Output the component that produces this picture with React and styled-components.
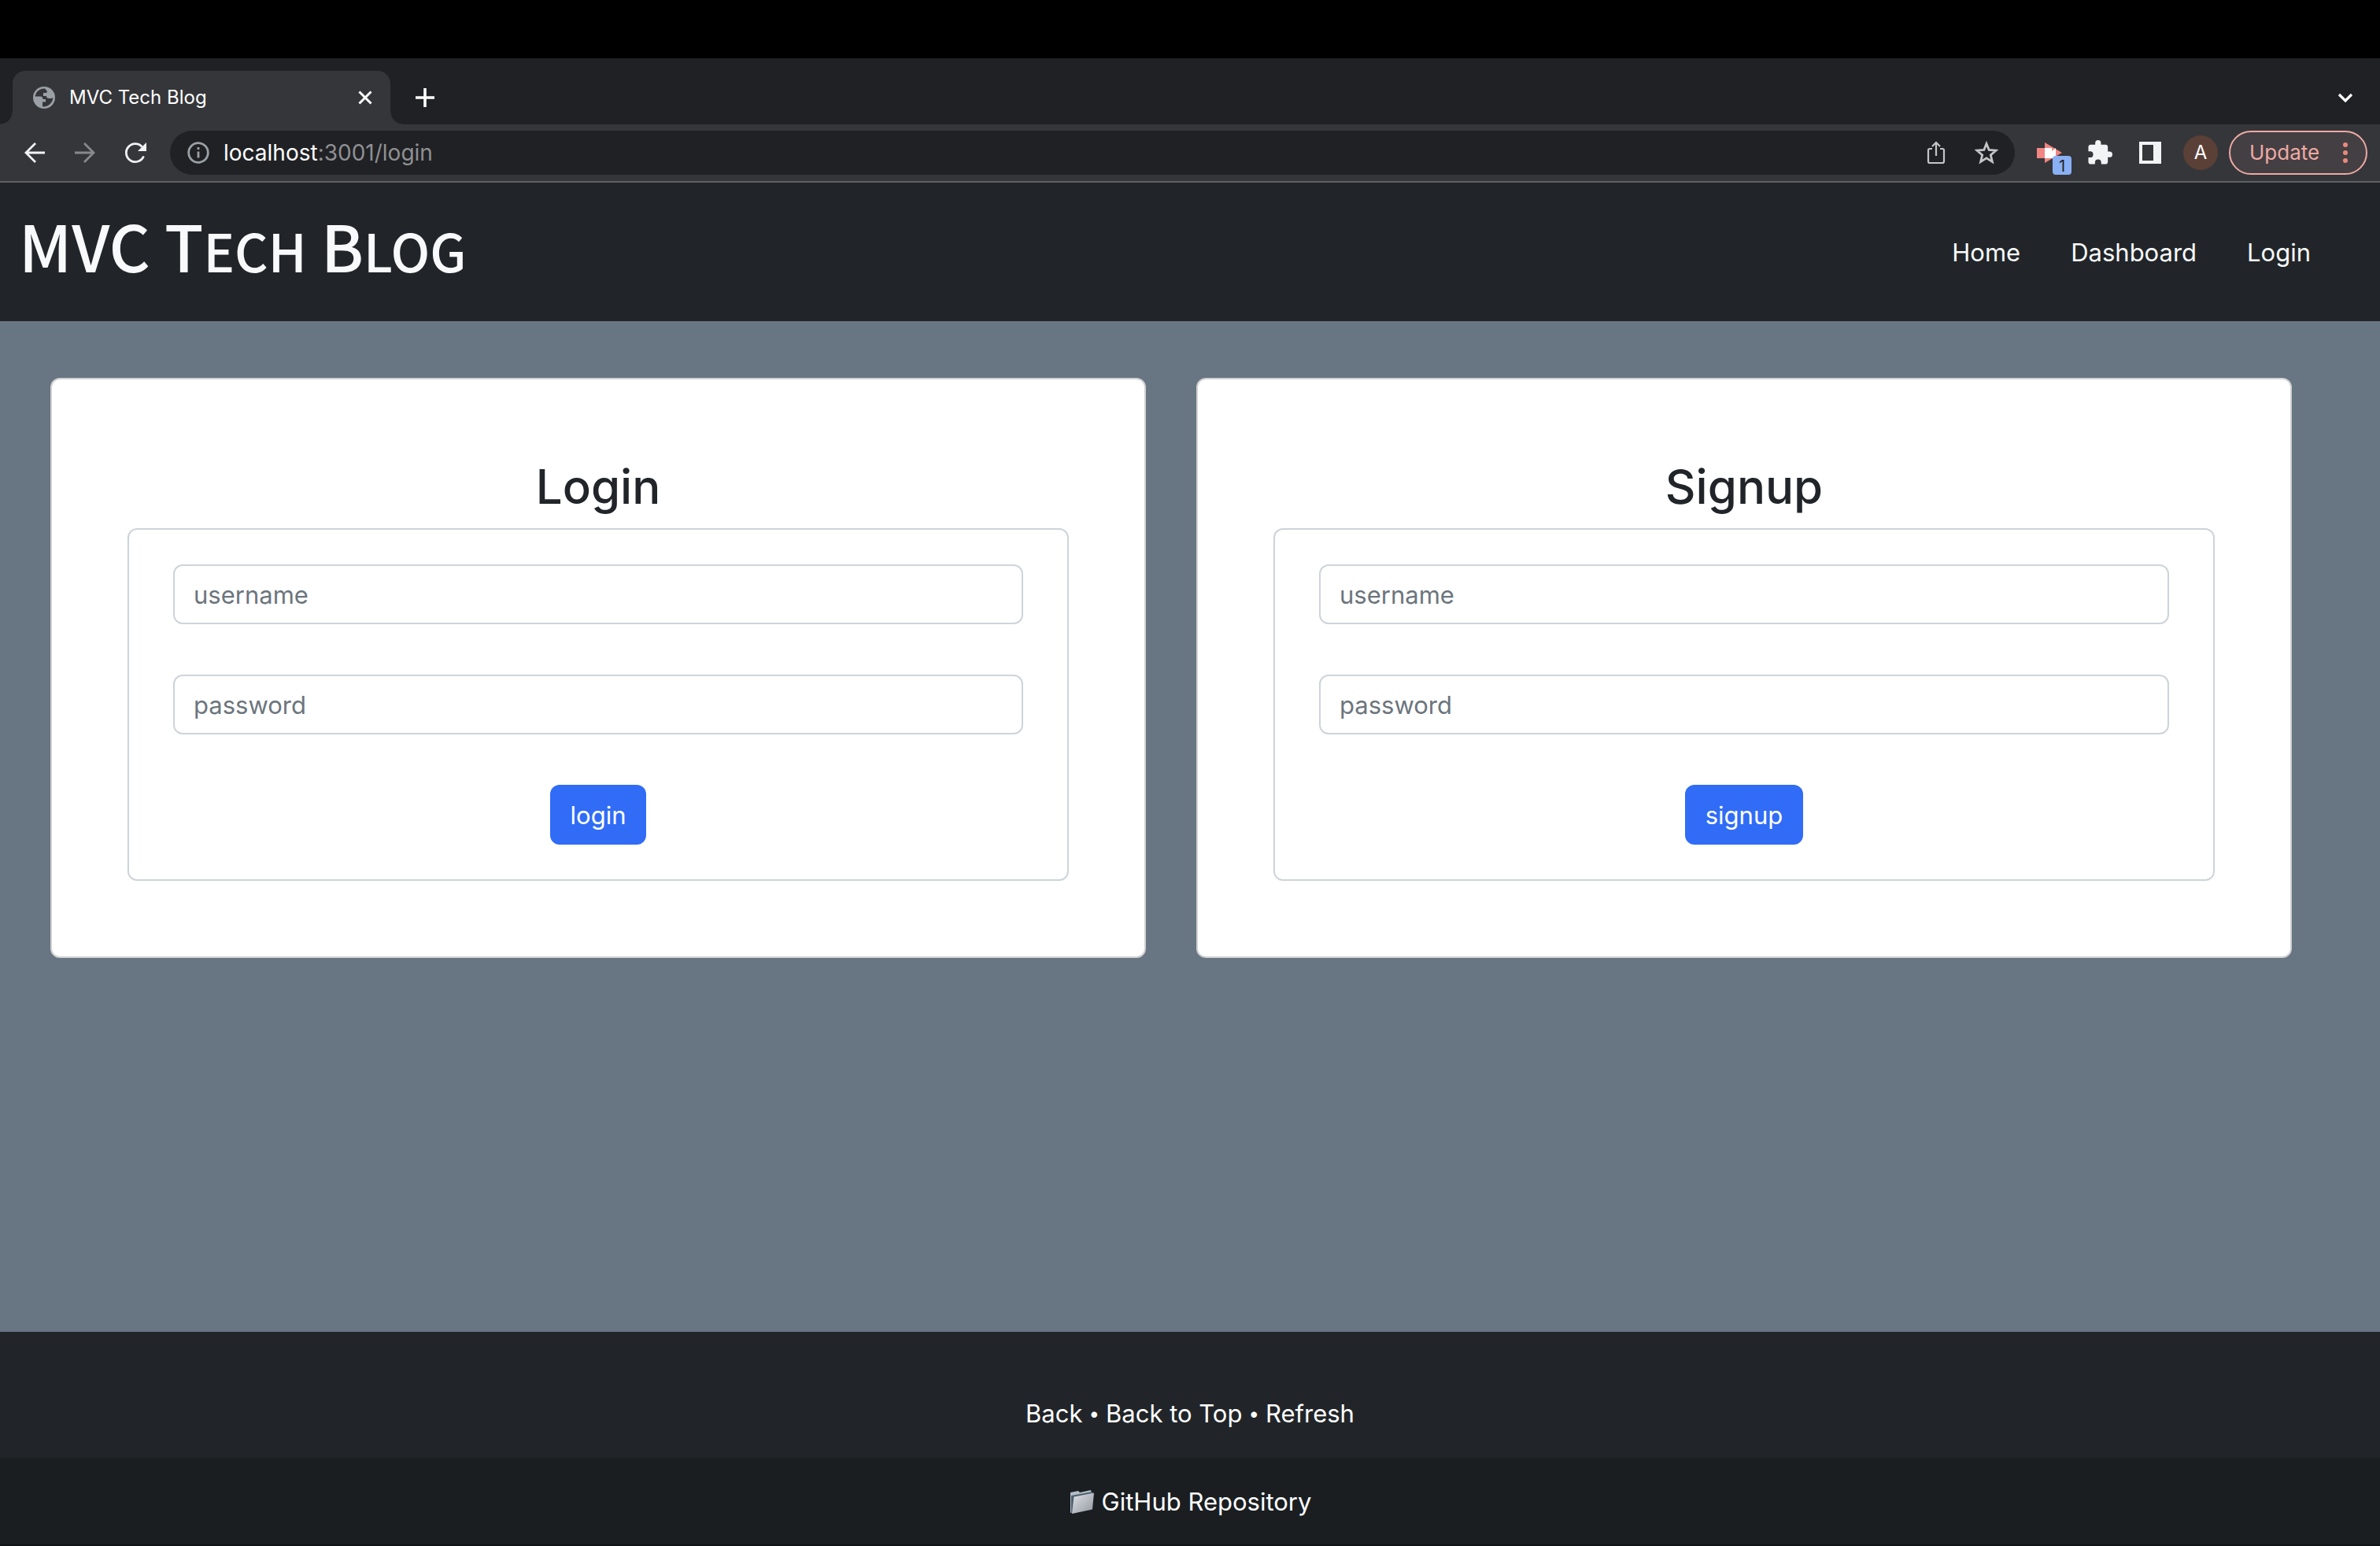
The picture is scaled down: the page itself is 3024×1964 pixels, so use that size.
import React from "react";
import styled, { createGlobalStyle } from "styled-components";

const GlobalStyle = createGlobalStyle`
  *, *::before, *::after { box-sizing: border-box; }
  html, body, #root { height: 100%; }
  body {
    margin: 0;
    background: #687582;
    color: #212529;
    font: 400 31px/48px Inter, "Liberation Sans", sans-serif;
  }
  button, input { font: inherit; }
  a { color: inherit; text-decoration: none; }
`;

const Screen = styled.div`
  min-height: 100%;
  display: flex;
  flex-direction: column;
`;

const MenuBar = styled.div`
  height: 74px;
  background: #000;
`;

const TabStrip = styled.div`
  height: 84px;
  padding: 16px 28px 0 16px;
  display: flex;
  align-items: stretch;
  background: #202124;
`;

const Tab = styled.div`
  position: relative;
  width: 480px;
  padding: 0 16px 0 24px;
  display: flex;
  align-items: center;
  gap: 16px;
  border-radius: 16px 16px 0 0;
  background: #35363a;
  color: #fff;
  font-size: 24px;
  line-height: 32px;

  &::before, &::after {
    content: "";
    position: absolute;
    bottom: 0;
    width: 16px;
    height: 16px;
  }
  &::before {
    right: 100%;
    background: radial-gradient(circle at 0 0, transparent 15px, #35363a 16px);
  }
  &::after {
    left: 100%;
    background: radial-gradient(circle at 100% 0, transparent 15px, #35363a 16px);
  }
`;

const TabTitle = styled.span`
  flex: 1;
`;

const IconButton = styled.button`
  width: 32px;
  height: 32px;
  padding: 0;
  border: 0;
  display: grid;
  place-items: center;
  background: none;
  color: ${(p) => p.$color || "#f1f3f4"};

  svg { display: block; width: 100%; height: 100%; }
`;

const StripActions = styled.div`
  flex: 1;
  padding: 0 0 0 28px;
  display: flex;
  align-items: center;
  justify-content: space-between;
`;

const Toolbar = styled.div`
  height: 74px;
  padding: 0 16px 0 28px;
  display: flex;
  align-items: center;
  border-bottom: 2px solid #5f6063;
  background: #35363a;
`;

const NavButtons = styled.div`
  display: flex;
  gap: 32px;
`;

const AddressBar = styled.div`
  flex: 1;
  height: 56px;
  margin: 0 28px 0 28px;
  padding: 0 20px 0 20px;
  display: flex;
  align-items: center;
  gap: 32px;
  border-radius: 28px;
  background: #202124;
`;

const Address = styled.div`
  flex: 1;
  display: flex;
  align-items: center;
  gap: 16px;
  color: #8f9093;
  font-size: 28px;
  line-height: 40px;

  b { color: #fff; font-weight: 400; }
`;

const Extensions = styled.div`
  display: flex;
  align-items: center;
  gap: 32px;
`;

const Badged = styled.div`
  position: relative;
`;

const Badge = styled.span`
  position: absolute;
  top: 20px;
  left: 20px;
  width: 24px;
  height: 24px;
  border-radius: 4px;
  background: #8ab0f4;
  color: #202124;
  font-size: 20px;
  line-height: 26px;
  text-align: center;
`;

const Profile = styled.button`
  width: 44px;
  height: 44px;
  margin: 0 -8px 0 -6px;
  padding: 0;
  border: 0;
  border-radius: 50%;
  background: #5a4037;
  color: #fff;
  font-size: 24px;
  line-height: 44px;
`;

const UpdateButton = styled.button`
  width: 176px;
  height: 56px;
  margin: 0 0 0 -10px;
  padding: 0 12px 0 24px;
  display: flex;
  align-items: center;
  justify-content: space-between;
  border: 2px solid #eeaaa4;
  border-radius: 28px;
  background: #443f42;
  color: #eeaaa4;
  font-size: 26px;
  line-height: 40px;

  svg { width: 28px; height: 28px; }
`;

const Header = styled.header`
  height: 176px;
  padding: 2px 88px 0 24px;
  display: flex;
  align-items: center;
  justify-content: space-between;
  background: #212529;
  color: #f8f9fa;
`;

const Brand = styled.h1`
  margin: 0;
  padding-bottom: 14px;
  font: 500 81px/100px "Noto Sans CJK JP", "Noto Sans", sans-serif;
`;

const SmallCaps = styled.span`
  font-size: 66px;
`;

const Nav = styled.nav`
  display: flex;
  gap: 64px;
`;

const Main = styled.main`
  flex: 1;
  padding: 72px 112px 72px 64px;
  display: grid;
  grid-template-columns: 1fr 1fr;
  align-items: start;
  gap: 64px;
`;

const Card = styled.section`
  padding: 96px;
  border: 2px solid #d0d1d2;
  border-radius: 12px;
  background: #fff;
  text-align: center;
`;

const CardTitle = styled.h2`
  margin: 0 0 13px;
  font-size: 60px;
  font-weight: 500;
  line-height: 80px;
`;

const Form = styled.form`
  padding: 44px 56px;
  display: flex;
  flex-direction: column;
  align-items: center;
  gap: 64px;
  border: 2px solid #ced4da;
  border-radius: 12px;
`;

const Field = styled.input`
  width: 100%;
  height: 76px;
  padding: 0 24px;
  border: 2px solid #ced4da;
  border-radius: 12px;
  background: #fff;
  color: #212529;

  &::placeholder { color: #6c757d; opacity: 1; }
`;

const Submit = styled.button`
  height: 76px;
  padding: 2px 26px 0;
  border: 0;
  border-radius: 12px;
  background: #306cf6;
  color: #fff;
`;

const Footer = styled.footer`
  background: #212529;
  color: #fff;
  text-align: center;
`;

const FooterLinks = styled.div`
  height: 160px;
  padding-top: 80px;
  display: flex;
  justify-content: center;
  gap: 8px;
`;

const Dot = styled.span`
  font-size: 24px;
`;

const Repository = styled.div`
  height: 112px;
  padding-top: 32px;
  display: flex;
  align-items: flex-start;
  justify-content: center;
  border-bottom: 2px solid #121416;
  background: #1a1e21;

  a { display: flex; align-items: center; gap: 8px; }
`;

const Stroke = ({ children, width = 2, ...rest }) => (
  <svg viewBox="0 0 32 32" fill="none" stroke="currentColor" strokeWidth={width} aria-hidden="true" {...rest}>
    {children}
  </svg>
);

const Globe = () => (
  <svg width="32" height="32" viewBox="0 0 32 32" aria-hidden="true">
    <circle cx="16" cy="16" r="14" fill="#9aa0a6" />
    <path
      fill="#35363a"
      d="M17 4.600C11 4 5.500 8.500 4.600 14.500h6.400c2.500 0 3.500 1.500 3.500 3.500h3.500v3.500h-4v5.800c7 .9 13-4.500 13.400-11.300-1 .8-2 1-3.400 1h-2c-2 0-3-1-3-3h-4v-4h3c1.200 0 2-.8 2-2z"
    />
  </svg>
);

const Folder = () => (
  <svg width="34" height="32" viewBox="0 0 34 32" aria-hidden="true">
    <defs>
      <linearGradient id="folder" x1="0" y1="0" x2="1" y2="1">
        <stop offset="0" stopColor="#dfe2e6" />
        <stop offset="1" stopColor="#9297a0" />
      </linearGradient>
    </defs>
    <path fill="#b3bec7" d="M2 4l10-2 2 2 14-3 1 4-24 24-3 1z" />
    <path fill="#4d5f6e" d="M3 8l27-5v6L5 30H3z" />
    <path fill="url(#folder)" d="M6.500 9.500L32 4.500 30 25.500 4 31z" />
  </svg>
);

function CredentialsCard({ id, title, action }) {
  return (
    <Card aria-labelledby={`${id}-title`}>
      <CardTitle id={`${id}-title`}>{title}</CardTitle>
      <Form onSubmit={(e) => e.preventDefault()}>
        <Field aria-label="username" name="username" placeholder="username" />
        <Field aria-label="password" name="password" type="password" placeholder="password" />
        <Submit type="submit">{action}</Submit>
      </Form>
    </Card>
  );
}

function Browser() {
  return (
    <>
      <TabStrip>
        <Tab>
          <Globe />
          <TabTitle>MVC Tech Blog</TabTitle>
          <IconButton $color="#fff" aria-label="Close tab">
            <Stroke width="3"><path d="M8.500 8.500l15 15M23.500 8.500l-15 15" /></Stroke>
          </IconButton>
        </Tab>
        <StripActions>
          <IconButton $color="#fff" aria-label="New tab">
            <Stroke width="3.600"><path d="M16 4v24M4 16h24" /></Stroke>
          </IconButton>
          <IconButton $color="#fff" aria-label="Search tabs">
            <Stroke width="3.200"><path d="M8 12l8 8 8-8" /></Stroke>
          </IconButton>
        </StripActions>
      </TabStrip>
      <Toolbar>
        <NavButtons>
          <IconButton aria-label="Back">
            <Stroke width="2.800"><path d="M29 16H5M17 4L5 16l12 12" /></Stroke>
          </IconButton>
          <IconButton $color="#88898c" aria-label="Forward">
            <Stroke width="2.800"><path d="M3 16h24M15 4l12 12-12 12" /></Stroke>
          </IconButton>
          <IconButton aria-label="Reload">
            <Stroke width="2.800">
              <path d="M26.500 20.500A11.500 11.500 0 1 1 24.500 8.500" />
              <path d="M30 3v11H19z" fill="currentColor" stroke="none" />
            </Stroke>
          </IconButton>
        </NavButtons>
        <AddressBar>
          <Address>
            <IconButton $color="#9aa0a6" aria-label="Site information">
              <Stroke width="2.800">
                <circle cx="16" cy="16" r="12.300" />
                <path d="M16 14.500v8M16 9v3" />
              </Stroke>
            </IconButton>
            <span><b>localhost</b>:3001/login</span>
          </Address>
          <IconButton $color="#c4c5c7" aria-label="Share">
            <Stroke width="2.200">
              <path d="M11 11H8a2 2 0 0 0-2 2v14a2 2 0 0 0 2 2h16a2 2 0 0 0 2-2V13a2 2 0 0 0-2-2h-3M16 20V3M11 8l5-5 5 5" />
            </Stroke>
          </IconButton>
          <IconButton $color="#c4c5c7" aria-label="Bookmark this tab">
            <Stroke width="2.800">
              <path d="M16 4.500l3.200 8 8.800.7-6.700 5.700 2.100 8.600L16 22.900l-7.400 4.600 2.100-8.600L4 13.200l8.800-.7z" />
            </Stroke>
          </IconButton>
        </AddressBar>
        <Extensions>
          <Badged>
            <IconButton aria-label="Screen recorder">
              <svg viewBox="0 0 32 32" aria-hidden="true">
                <path fill="#f08581" d="M0 10h10V3l22 13-22 13v-6H0z" />
                <path fill="#fff" d="M10 10h9v4l5-4v12l-5 1h-9z" />
              </svg>
            </IconButton>
            <Badge>1</Badge>
          </Badged>
          <IconButton aria-label="Extensions">
            <svg viewBox="1 1 22 22" fill="currentColor" aria-hidden="true">
              <path d="M20.500 11H19V7c0-1.100-.9-2-2-2h-4V3.500a2.500 2.500 0 0 0-5 0V5H4c-1.100 0-2 .9-2 2v3.800h1.500a2.700 2.700 0 0 1 0 5.400H2V20c0 1.100.9 2 2 2h3.800v-1.500a2.700 2.700 0 0 1 5.400 0V22H17c1.100 0 2-.9 2-2v-4h1.500a2.500 2.500 0 0 0 0-5z" />
            </svg>
          </IconButton>
          <IconButton aria-label="Side panel">
            <svg viewBox="0 0 32 32" fill="currentColor" fillRule="evenodd" aria-hidden="true">
              <path d="M2 2h28v28H2zM6 6v20h14V6z" />
            </svg>
          </IconButton>
          <Profile aria-label="Profile">A</Profile>
          <UpdateButton>
            Update
            <svg viewBox="0 0 28 28" fill="#e88a7d" aria-hidden="true">
              <circle cx="14" cy="4" r="3" />
              <circle cx="14" cy="14" r="3" />
              <circle cx="14" cy="24" r="3" />
            </svg>
          </UpdateButton>
        </Extensions>
      </Toolbar>
    </>
  );
}

export default function App() {
  return (
    <Screen>
      <GlobalStyle />
      <MenuBar />
      <Browser />
      <Header>
        <Brand>
          MVC T<SmallCaps>ECH</SmallCaps> B<SmallCaps>LOG</SmallCaps>
        </Brand>
        <Nav>
          <a href="#home">Home</a>
          <a href="#dashboard">Dashboard</a>
          <a href="#login">Login</a>
        </Nav>
      </Header>
      <Main>
        <CredentialsCard id="login" title="Login" action="login" />
        <CredentialsCard id="signup" title="Signup" action="signup" />
      </Main>
      <Footer>
        <FooterLinks>
          <a href="#back">Back</a>
          <Dot>•</Dot>
          <a href="#top">Back to Top</a>
          <Dot>•</Dot>
          <a href="#refresh">Refresh</a>
        </FooterLinks>
        <Repository>
          <a href="#repository"><Folder />GitHub Repository</a>
        </Repository>
      </Footer>
    </Screen>
  );
}
